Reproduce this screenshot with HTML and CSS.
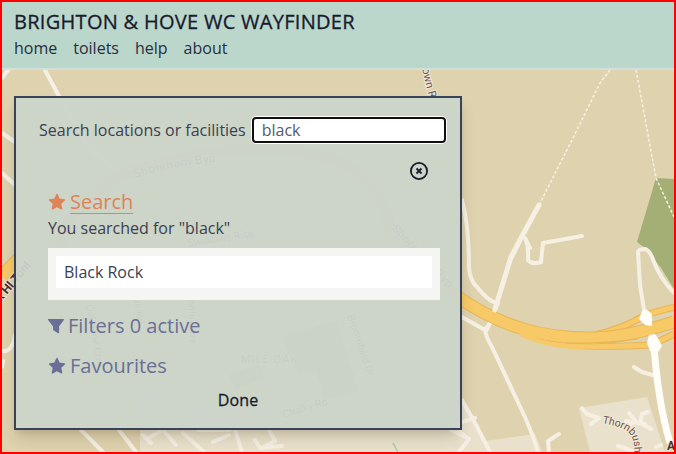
FILE: index.html
```html
<!DOCTYPE html>
<html lang="en">
<head>
<meta charset="utf-8">
<title>Brighton &amp; Hove WC Wayfinder</title>
<link rel="stylesheet" href="styles.css">
</head>
<body>
<div class="app">
  <header class="header">
    <h1 class="title">BRIGHTON &amp; HOVE WC WAYFINDER</h1>
    <nav class="nav"><a>home</a><a>toilets</a><a>help</a><a>about</a></nav>
  </header>
  <main class="main">
    <svg class="map" viewBox="2 70 672 382" aria-hidden="true">
      <rect x="2" y="70" width="672" height="382" fill="#dfd2ae"/>
      <g fill="#e9e1cc">
        <path d="M140 452V390L220 410L300 400L462 399L475 425L480 452Z"/>
        <path d="M462 399L485 441L535 434L542 452H462Z"/>
        <path d="M579 408L647 397L665 452H590Z"/>
      </g>
      <path d="M656 178L674 179V289L661 268L645 248L637 242Z" fill="#a4af76"/>
      <g fill="#b9aa88"><path d="M283 337L336 320L358 390L324 399L317 371L298 376Z"/><path d="M228 375L260 364L264 377L236 390Z"/></g>
      <g class="road">
        <path d="M45 70L61 100L90 150L130 180"/>
        <path d="M2 78L8 70M2 133L15 142M2 173L15 185"/>
        <path d="M2 351Q12 353 15 335"/>
        <path d="M2 367L3 361M81 430L103 452M119 430L136 452"/>
        <path d="M143 435L151 443M150 437L163 430L176 445M183 433L204 452M213 442L229 435M198 430L230 430M235 430L242 452M268 428L275 441L262 448M255 440L260 448L282 446"/>
        <path d="M462 200Q469 225 469 268Q470 281 477 287Q490 303 498 303"/>
        <path d="M539 205L521 238L511 257Q507 270 495 309" stroke-width="5"/>
        <path d="M525 238L530 248M525 238Q529 246 528 260Q532 265 541 262L543 243L582 236"/>
        <path d="M518 245Q514 253 508 265"/>
        <path d="M462 317L485 330L490 323M485 330Q486 337 492 347L524 415Q533 435 538 452"/>
        <path d="M462 400L475 423L490 452M475 418L456 424M451 430L469 439L459 452M457 430L469 439"/>
        <path d="M645 316L640 285L638 252Q639 249 645 249Q650 250 654 262Q660 278 674 293"/>
        <path d="M634 367L642 372L656 376"/>
        <path d="M582 408L587 414L599 418L591 424M549 452L548 441L559 434"/>
        <path d="M629 413L635 420L629 426M648 412L642 414L640 423L651 429M618 446L625 448L634 452M626 421L645 424M656 447L661 445"/>
      </g>
      <g class="highway-edge"><path d="M595 335Q625 328 645 315L674 307M548 341Q575 349 652 345L674 334"/></g>
      <g class="highway-thin"><path d="M595 335Q625 328 645 315L674 307M548 341Q575 349 652 345L674 334"/></g>
      <path d="M19 258L2 276M455 295C500 327 544 339 595 338Q628 337 674 322" fill="none" stroke="#e8b556" stroke-width="13"/>
      <path class="highway" d="M19 258L2 276M455 295C500 327 544 339 595 338Q628 337 674 322"/>
      <path d="M520 334Q545 346 575 347L648 345" fill="none" stroke="#f7c967" stroke-width="4"/>
      <path d="M565 343Q600 344 638 339" fill="none" stroke="#e8b556" stroke-width="1"/>
      <path d="M498 303L494 312M490 323L486 331" fill="none" stroke="#f5f0e3" stroke-width="4"/>
      <g fill="#fffdf8"><path d="M642 311L646 309L652 314L652 326L645 325L639 319Z"/><path d="M649 335L655 334L659 340L662 346L657 354L650 351L647 343Z"/></g>
      <path d="M654 346Q658 402 670 443" fill="none" stroke="#fffdf8" stroke-width="7"/>
      <path d="M539 205L575 134L600 83L610 70M636 70L656 178L674 217" fill="none" stroke="#f7f1df" stroke-width="1.5" stroke-dasharray="3 2"/>
      <path d="M393 443L398 452" stroke="#a6c9b6" stroke-width="1.5"/>
      <path d="M60 255Q65 170 220 152T390 230L455 295" fill="none" stroke="#e9c982" stroke-width="11"/>
      <defs>
        <path id="thornbush" d="M602 423Q625 427 631 435Q636 443 634 470"/>
        <path id="link-road" d="M1 302L43 252"/>
        <path id="west-byp" d="M135 178Q175 165 235 160"/>
        <path id="east-byp" d="M391 229L458 299"/>
      </defs>
      <g class="label">
        <text><textPath href="#thornbush">Thornbush Cl</textPath></text>
        <text transform="translate(422 69) rotate(76)" font-size="11">own R</text>
        <text class="label-strong"><textPath href="#link-road">k Hl Tunl</textPath></text>
        <text class="label-wide"><textPath href="#west-byp">Shoreham Byp</textPath></text>
        <text class="label-wide"><textPath href="#east-byp">Shoreham Byp</textPath></text>
        <text x="241" y="363" letter-spacing="1.3">MILE OAK</text>
        <text transform="translate(347 316) rotate(71)">Broomfield Dr</text>
        <text transform="translate(284 418) rotate(-17)">Chalky Rd</text>
        <text transform="translate(86 305) rotate(80)">Oakdene Cres</text>
        <text transform="translate(133 291) rotate(84)">Oak Rd</text>
        <text transform="translate(188 290) rotate(88)">Stanley Ave</text>
        <text transform="translate(188 247) rotate(-9)">Swallows Rise</text>
        <text class="label-strong" x="667" y="450">A.</text>
      </g>
    </svg>
    <section class="panel">
      <label class="search-row">Search locations or facilities<input class="search-input" type="text" value="black"></label>
      <div class="close-row">
        <svg class="close" viewBox="0 0 18 18"><circle cx="9" cy="9" r="8.1"/><path d="M6.5 6.5L11.5 11.5M11.5 6.5L6.5 11.5"/></svg>
      </div>
      <div class="sections">
        <h2 class="heading heading-active"><svg class="star" viewBox="0 0 18 18"><path d="M9 1.5L11.2 6.2L16.4 6.9L12.6 10.6L13.6 15.9L9 13.4L4.4 15.9L5.4 10.6L1.6 6.9L6.8 6.2Z"/></svg><span class="underlined">Search</span></h2>
        <p class="summary">You searched for "black"</p>
        <ul class="results"><li class="result">Black Rock</li></ul>
        <h2 class="heading heading-filters"><svg class="funnel" viewBox="0 0 16 16"><path d="M.7 1.6H15.3L10.4 8.2V14.6L5.8 11.6V8.2Z"/></svg><span>Filters 0 active</span></h2>
        <h2 class="heading heading-favourites"><svg class="star" viewBox="0 0 18 18"><path d="M9 1.5L11.2 6.2L16.4 6.9L12.6 10.6L13.6 15.9L9 13.4L4.4 15.9L5.4 10.6L1.6 6.9L6.8 6.2Z"/></svg><span>Favourites</span></h2>
      </div>
      <button class="done" type="button">Done</button>
    </section>
  </main>
</div>
</body>
</html>
```
FILE: styles.css
```css
* { box-sizing: border-box; margin: 0; padding: 0; }
body { font: 16px/24px "Open Sans", sans-serif; color: #3a4152; }
.app { display: flex; flex-direction: column; width: 676px; height: 454px; border: 2px solid #f00; overflow: hidden; }
.header { flex: none; height: 68px; padding: 6px 12px 0; background: #bbd6ca; border-bottom: 2px solid #cfe1d8; color: #161b2e; }
.title { font-size: 20px; line-height: 28px; font-weight: 400; letter-spacing: .29px; -webkit-text-stroke: .3px currentColor; white-space: nowrap; }
.nav { display: flex; gap: 16px; color: #272e40; }
.main { position: relative; flex: 1; min-height: 0; padding: 26px 12px 0; }
.map { position: absolute; inset: 0; width: 672px; height: 382px; }
.road { fill: none; stroke: #f5f0e3; stroke-width: 4; stroke-linecap: round; stroke-linejoin: round; }
.highway { fill: none; stroke: #f7c967; stroke-width: 11; }
.highway-edge { fill: none; stroke: #e8b556; stroke-width: 7; }
.highway-thin { fill: none; stroke: #f7c967; stroke-width: 5; }
.label { font: 10.5px Roboto, sans-serif; fill: #6a5050; stroke: #f2ead8; stroke-width: 2px; paint-order: stroke; }
.label-strong { font-size: 12px; font-weight: 700; fill: #4c3030; }
.label-wide { font-size: 12px; letter-spacing: .5px; }
.panel { position: relative; display: flex; flex-direction: column; width: 448px; height: 334px; border: 2px solid #384259; background: rgba(203, 212, 201, .95); box-shadow: 0 10px 15px -3px rgba(60, 40, 10, .18), 0 4px 6px -2px rgba(60, 40, 10, .1); }
.search-row { display: flex; align-items: center; height: 26px; margin: 19px 0 0 23px; gap: 6px; white-space: nowrap; }
.search-input { width: 194px; height: 26px; padding: 0 8px; border: 2px solid #101010; border-radius: 4px; background: #fff; box-shadow: 0 0 0 1px #fff; color: #555b6b; font: inherit; outline: none; }
.close-row { display: flex; justify-content: flex-end; height: 18px; margin: 19px 32px 0 0; }
.close { width: 18px; height: 18px; fill: none; stroke: #161b2e; stroke-width: 1.8; }
.sections { margin: 8px 20px 0 32px; }
.heading { display: flex; align-items: center; height: 28px; font-size: 20px; line-height: 28px; font-weight: 400; color: #6a6f98; }
.heading svg { fill: currentColor; stroke: currentColor; stroke-width: 1.4; stroke-linejoin: round; }
.heading-active { color: #e08358; }
.underlined { border-bottom: 1px solid #e08358; line-height: 23px; }
.star { width: 18px; height: 18px; margin-right: 4px; }
.funnel { width: 16px; height: 16px; margin-right: 4px; }
.summary { line-height: 24px; }
.results { height: 52px; margin-top: 8px; padding: 8px; background: #f5f5f3; list-style: none; }
.result { height: 32px; padding: 0 8px; line-height: 32px; background: #fff; }
.heading-filters { margin-top: 12px; }
.heading-favourites { margin-top: 12px; }
.done { align-self: center; margin-top: 8px; border: 0; background: none; color: #161b2e; font: 400 16px/24px "Open Sans", sans-serif; -webkit-text-stroke: .3px currentColor; letter-spacing: .1px; }
```
